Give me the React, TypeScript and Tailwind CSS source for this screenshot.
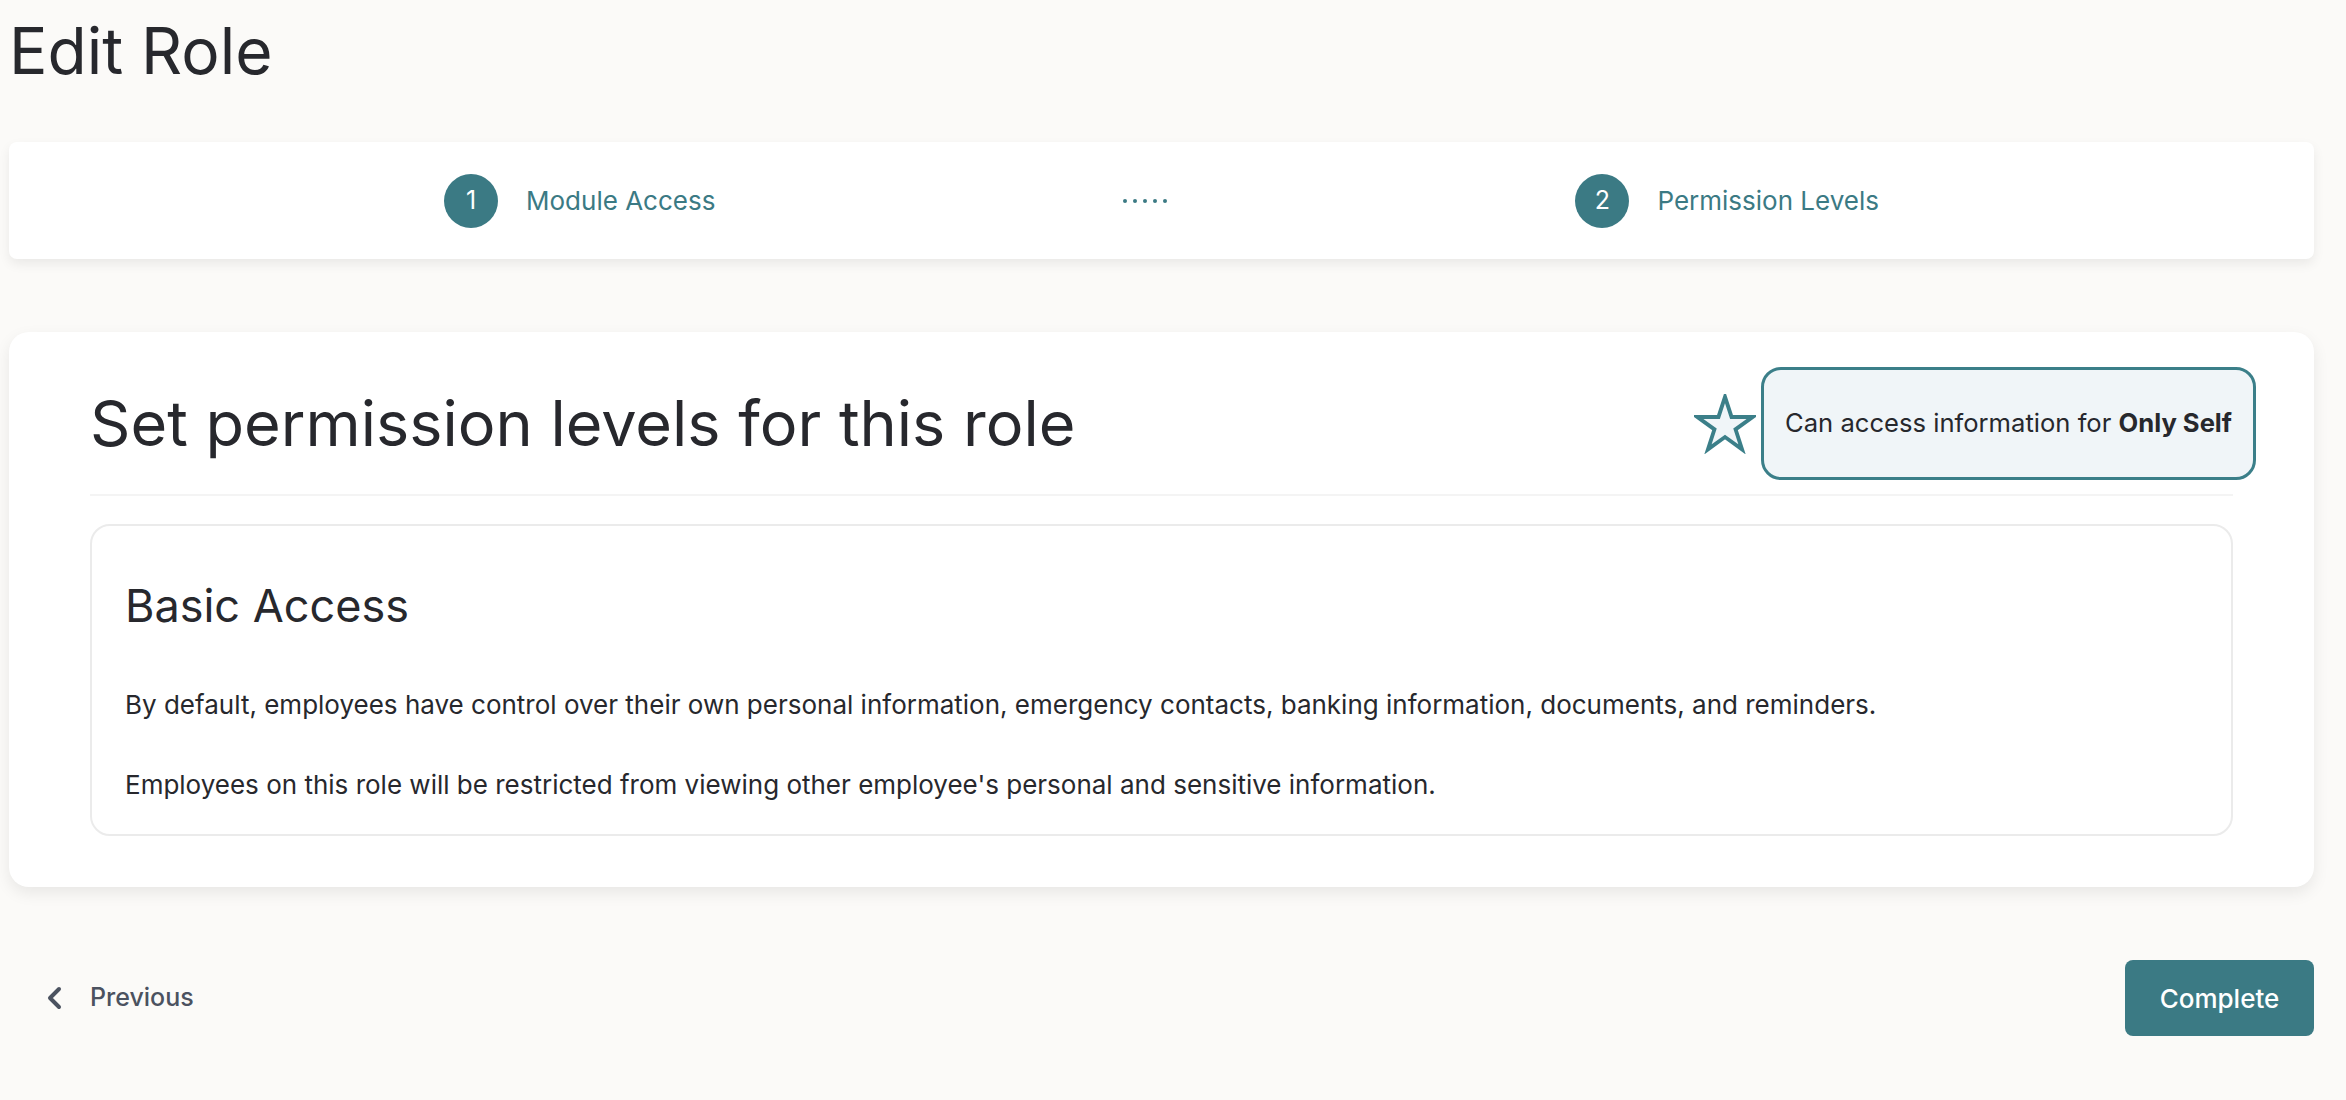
import React from 'react';

// ============================================================================
// Pieces
// ============================================================================

function Step({ n, label }: { n: number; label: string }) {
  return (
    <div className="flex items-center gap-[28px]">
      <div className="flex h-[54px] w-[54px] items-center justify-center rounded-full bg-[#3b7a84] text-[25px] text-white">
        {n}
      </div>
      <span className="text-[26px] text-[#3b7a84]">{label}</span>
    </div>
  );
}

function StepDots() {
  return (
    <div className="flex items-center gap-[6px]">
      {[0, 1, 2, 3, 4].map(i => (
        <span key={i} className="h-[4px] w-[4px] rounded-full bg-[#3b7a84]" />
      ))}
    </div>
  );
}

function StarOutline() {
  return (
    <svg width="62" height="60" viewBox="0 0 64 62" fill="none">
      <polygon
        points="32,3 38.74,23.73 60.53,23.73 42.9,36.54 49.63,57.27 32,44.46 14.37,57.27 21.1,36.54 3.47,23.73 25.26,23.73"
        fill="#f0f5f8"
        stroke="#3b7f89"
        strokeWidth="4"
        strokeLinejoin="miter"
      />
    </svg>
  );
}

function ChevronLeft() {
  return (
    <svg width="18" height="24" viewBox="0 0 18 24" fill="none">
      <polyline
        points="14,3 5,12 14,21"
        stroke="#4b5260"
        strokeWidth="4"
        strokeLinecap="round"
        strokeLinejoin="round"
      />
    </svg>
  );
}

// ============================================================================
// Page
// ============================================================================

export default function App() {
  return (
    <div className="min-h-screen bg-[#fbfaf8] pl-[9px] pr-[32px] pt-[19px] pb-[40px] font-['Inter',sans-serif] text-[#27282d]">
      <h1 className="text-[64px] font-normal leading-none">Edit Role</h1>

      {/* Stepper */}
      <div className="mt-[59px] flex h-[117px] items-center justify-center gap-[408px] rounded-lg bg-white shadow-[0_5px_12px_rgba(0,0,0,0.07)]">
        <Step n={1} label="Module Access" />
        <StepDots />
        <Step n={2} label="Permission Levels" />
      </div>

      {/* Permission card */}
      <div className="mt-[73px] rounded-[20px] bg-white px-[81px] pt-[35px] pb-[51px] shadow-[0_6px_16px_rgba(0,0,0,0.08)]">
        <div className="flex items-center justify-between border-b-2 border-[#f4f4f4] pb-[14px]">
          <h2 className="text-[63px] font-normal leading-none">Set permission levels for this role</h2>
          <div className="mr-[-23px] flex items-center gap-[5px]">
            <StarOutline />
            <div className="flex h-[113px] items-center rounded-[20px] border-[3px] border-[#3b7f89] bg-[#f0f5f8] px-[21px] text-[25.6px]">
              <span>
                Can access information for <span className="font-bold">Only Self</span>
              </span>
            </div>
          </div>
        </div>

        <div className="mt-[28px] rounded-[20px] border-2 border-[#ebebeb] px-[33px] pt-[57px] pb-[29px]">
          <h3 className="text-[45px] font-normal leading-none">Basic Access</h3>
          <p className="mt-[57px] text-[26px] leading-[40px]">
            By default, employees have control over their own personal information, emergency contacts, banking
            information, documents, and reminders.
          </p>
          <p className="mt-[40px] text-[26px] leading-[40px]">
            Employees on this role will be restricted from viewing other employee's personal and sensitive
            information.
          </p>
        </div>
      </div>

      {/* Footer actions */}
      <div className="mt-[73px] flex items-center justify-between">
        <button className="ml-[36px] flex items-center gap-[27px] text-[25px] font-medium text-[#4b5260]">
          <ChevronLeft />
          Previous
        </button>
        <button className="flex h-[76px] w-[189px] items-center justify-center rounded-lg bg-[#3b7a84] text-[26px] font-medium text-white">
          Complete
        </button>
      </div>
    </div>
  );
}
